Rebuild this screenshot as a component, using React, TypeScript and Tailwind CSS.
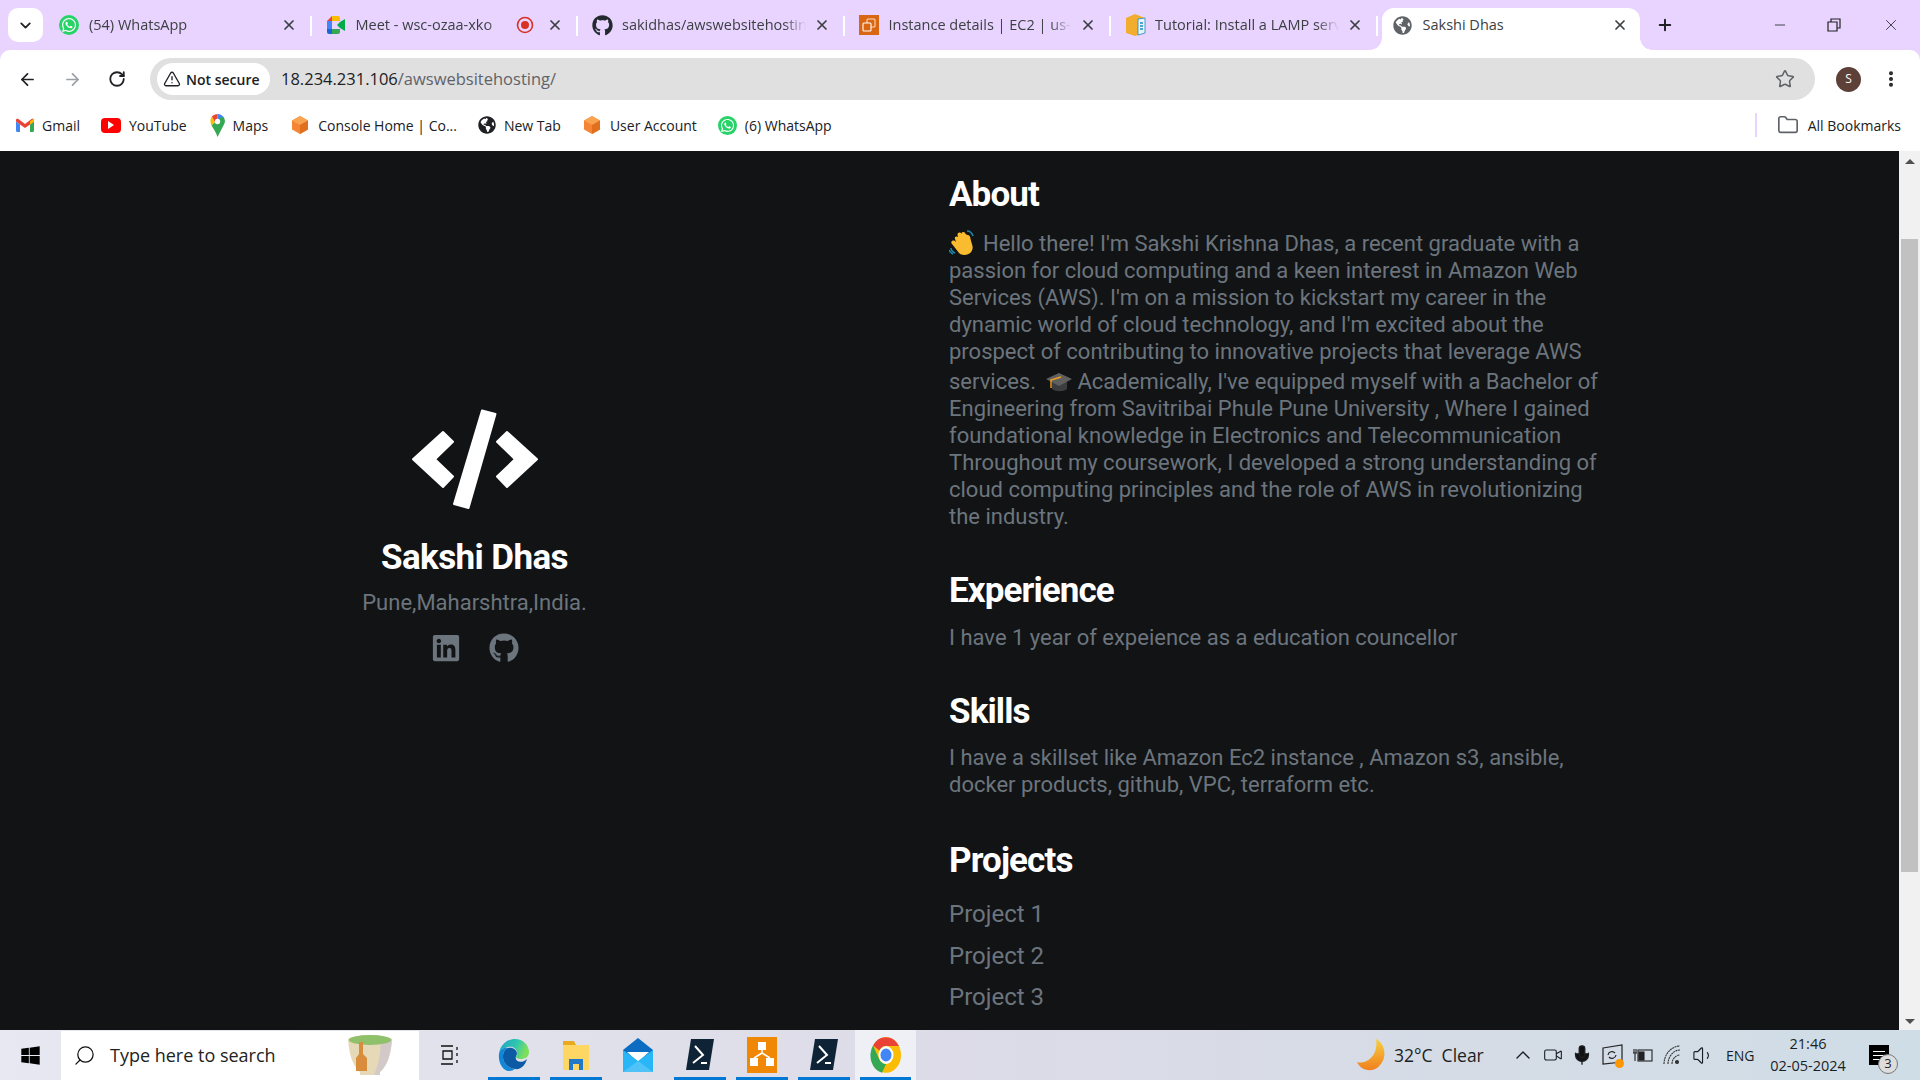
import React from "react";
import { ArrowLeft, ArrowRight, RotateCw, TriangleAlert, Star, EllipsisVertical, Folder, X, Plus, Minus, ChevronDown, ChevronUp, Search, Mic, Volume1, Video } from "lucide-react";
import { FaWhatsapp, FaGithub, FaLinkedin, FaWindows, FaGlobeAmericas } from "react-icons/fa";

const Wa = ({ s = 20 }: { s?: number }) => (
  <span className="flex shrink-0 items-center justify-center rounded-full bg-[#25d366] text-white" style={{ width: s, height: s }}>
    <FaWhatsapp size={s - 4} />
  </span>
);
const Globe = ({ c = "#202124", s = 18 }: { c?: string; s?: number }) => <FaGlobeAmericas size={s} color={c} className="shrink-0" />;
const Cube = ({ s = 20 }: { s?: number }) => (
  <svg width={s} height={s} viewBox="0 0 20 20" className="shrink-0">
    <path d="M10 1l8 4.500v9L10 19l-8-4.500v-9z" fill="#f58536" />
    <path d="M10 1l8 4.500L10 10 2 5.500z" fill="#f9a350" />
    <path d="M10 10l8-4.500v9L10 19z" fill="#e0701e" />
  </svg>
);
const MeetIcon = () => (
  <svg width="20" height="20" viewBox="0 0 20 20" className="shrink-0">
    <path d="M1 6l5-5v5z" fill="#ea4335" />
    <path d="M1 6h5v8H1z" fill="#4285f4" />
    <path d="M1 14h5v5H3a2 2 0 0 1-2-2z" fill="#1967d2" />
    <path d="M6 1h6a2 2 0 0 1 2 2v3H6z" fill="#fbbc04" />
    <path d="M6 14h8v3a2 2 0 0 1-2 2H6z" fill="#34a853" />
    <path d="M11 10l3-3v6zM14 7l5-3v12l-5-3z" fill="#00ac47" />
  </svg>
);
const Rec = () => (
  <svg width="18" height="18" viewBox="0 0 18 18" className="shrink-0">
    <circle cx="9" cy="9" r="7.500" fill="none" stroke="#d93025" strokeWidth="1.600" />
    <circle cx="9" cy="9" r="4" fill="#d93025" />
  </svg>
);
const Ec2Icon = () => (
  <svg width="20" height="20" viewBox="0 0 20 20" className="shrink-0">
    <rect width="20" height="20" fill="#d86613" />
    <rect x="8" y="4" width="8" height="8" rx="1" fill="none" stroke="#ffd9b8" strokeWidth="1.100" />
    <rect x="4" y="8" width="8" height="8" rx="1" fill="#d86613" stroke="#fff" strokeWidth="1.100" />
  </svg>
);
const BoxIcon = () => (
  <svg width="21" height="24" viewBox="0 0 21 24" className="shrink-0">
    <path d="M1 5l9-4 10 4v15l-10 3-9-3z" fill="#f2ad2e" />
    <path d="M13 6l7-1v15l-7 2z" fill="#e8f4fb" stroke="#1f8ac0" strokeWidth="0.800" />
    <path d="M15 10h3M15 13h3M15 16h3" stroke="#1f8ac0" strokeWidth="1.300" />
  </svg>
);
const Gmail = () => (
  <svg width="18" height="15" viewBox="0 0 18 14" className="shrink-0">
    <path d="M0 3v9a1.500 1.500 0 0 0 1.500 1.500H4V6z" fill="#4285f4" />
    <path d="M14 6v7.500h2.500A1.500 1.500 0 0 0 18 12V3z" fill="#34a853" />
    <path d="M4 6L0 3V1.500C0 .300 1.500-.300 2.400.500L9 5.500 15.600.500C16.500-.300 18 .300 18 1.500V3l-4 3-5 3.500z" fill="#ea4335" />
    <path d="M14 2.800L18 0v3l-4 3z" fill="#fbbc04" />
  </svg>
);
const Yt = () => (
  <span className="flex h-[15px] w-5 shrink-0 items-center justify-center rounded-[4px] bg-[#f00]">
    <span className="h-0 w-0 border-y-[4px] border-l-[6px] border-y-transparent border-l-white" />
  </span>
);
const MapsPin = () => (
  <svg width="15" height="23" viewBox="0 0 15 23" className="shrink-0">
    <path d="M7.500 0a7.500 7.500 0 0 1 6.500 3.800L10 8.500 7.500 5z" fill="#4285f4" />
    <path d="M1.800 2.600A7.500 7.500 0 0 1 7.500 0v5L5 8.500z" fill="#ea4335" />
    <path d="M.500 6A7.500 7.500 0 0 1 1.800 2.600L5 8.500 1.500 11.500C.800 10 .300 8 .500 6z" fill="#fbbc04" />
    <path d="M1.500 11.500L11 3 14 3.800c1.500 2.500 1 5.200-.300 7.200L7.500 23C6 18 3.500 15 1.500 11.500z" fill="#34a853" />
    <circle cx="7.500" cy="7.500" r="2.700" fill="#fff" />
  </svg>
);

const TABS: { i: React.ReactNode; t: string; rec?: boolean }[] = [
  { i: <Wa />, t: "(54) WhatsApp" },
  { i: <MeetIcon />, t: "Meet - wsc-ozaa-xko", rec: true },
  { i: <FaGithub size={21} color="#24292f" className="shrink-0" />, t: "sakidhas/awswebsitehosting" },
  { i: <Ec2Icon />, t: "Instance details | EC2 | us-east-1" },
  { i: <BoxIcon />, t: "Tutorial: Install a LAMP server on" },
];

function Tab({ i, t, rec }: { i: React.ReactNode; t: string; rec?: boolean }) {
  return (
    <div className="relative flex h-[50px] w-[266.500px] shrink-0 items-center pl-[14px] pr-[15px]">
      <span className="flex w-[20px] justify-center">{i}</span>
      <span className="ml-[10px] mr-[8px] min-w-0 flex-1 overflow-hidden whitespace-nowrap text-[14.500px] text-[#3c4043] [mask-image:linear-gradient(to_left,transparent_0,black_22px)]">
        {t}
      </span>
      {rec && <span className="mr-[13px]"><Rec /></span>}
      <X size={16} strokeWidth={2.600} className="shrink-0 text-[#3c4043]" />
      <span className="absolute right-0 top-[16px] h-[20px] w-[2px] bg-white" />
    </div>
  );
}

function TabBar() {
  return (
    <div className="flex h-[50px] shrink-0 items-end bg-[#e8d4fe]">
      <div className="ml-[8px] mr-[2px] flex h-[34px] w-[35px] shrink-0 items-center justify-center self-center rounded-[10px] bg-white">
        <ChevronDown size={17} strokeWidth={2.600} color="#202124" />
      </div>
      <div className="flex">
        {TABS.map((x) => <Tab key={x.t} i={x.i} t={x.t} rec={x.rec} />)}
      </div>
      <div className="relative ml-[4px] flex h-[42px] w-[258px] shrink-0 items-center rounded-t-[12px] bg-white pb-[8px] pl-[11px] pr-[12px]">
        <span className="absolute bottom-0 left-[-12px] h-[12px] w-[12px] bg-[radial-gradient(circle_at_0_0,#e8d4fe_11.500px,#ffffff_12px)]" />
        <span className="absolute bottom-0 right-[-12px] h-[12px] w-[12px] bg-[radial-gradient(circle_at_100%_0,#e8d4fe_11.500px,#ffffff_12px)]" />
        <Globe c="#5f6368" s={19} />
        <span className="ml-[11px] flex-1 text-[14.500px] text-[#3c4043]">Sakshi Dhas</span>
        <X size={16} strokeWidth={2.600} className="text-[#3c4043]" />
      </div>
      <div className="ml-[16px] flex h-[50px] items-center">
        <Plus size={18} strokeWidth={2.600} className="text-[#202124]" />
      </div>
      <div className="ml-auto flex h-[50px] items-center pr-[20px]">
        <Minus size={16} strokeWidth={1.200} className="mr-[39px] text-[#202124]" />
        <svg width="14" height="14" viewBox="0 0 14 14" className="mr-[41px]">
          <path d="M1 4h9v9H1zM4 4V1h9v9h-3" fill="none" stroke="#202124" strokeWidth="1.200" />
        </svg>
        <X size={18} strokeWidth={1.100} className="text-[#202124]" />
      </div>
    </div>
  );
}

function Toolbar() {
  return (
    <div className="flex h-[50px] shrink-0 items-center rounded-tl-[10px] rounded-tr-[10px] bg-white pl-[18px] pt-[8px]">
      <ArrowLeft size={19} strokeWidth={2.200} className="text-[#202124]" />
      <ArrowRight size={19} strokeWidth={2.200} className="ml-[26px] text-[#9aa0a6]" />
      <RotateCw size={18} strokeWidth={2.400} className="ml-[26px] text-[#202124]" />
      <div className="ml-[24px] flex h-[42px] w-[1665px] items-center rounded-full bg-[#e0e0e0] pl-[7px] pr-[20px]">
        <div className="flex h-[32px] w-[113px] items-center rounded-full bg-white pl-[6px]">
          <TriangleAlert size={18} strokeWidth={1.800} className="text-[#202124]" />
          <span className="ml-[5px] text-[14px] font-semibold text-[#202124]">Not secure</span>
        </div>
        <span className="ml-[11px] text-[16.500px] text-[#202124]">
          18.234.231.106<span className="text-[#5f6368]">/awswebsitehosting/</span>
        </span>
        <Star size={20} strokeWidth={1.800} className="ml-auto text-[#5f6368]" />
      </div>
      <div className="ml-[21px] flex h-[25px] w-[25px] items-center justify-center rounded-full bg-[#5d4037] text-[12px] text-white">S</div>
      <EllipsisVertical size={20} strokeWidth={2.800} className="ml-[20px] text-[#202124]" />
    </div>
  );
}

function Bm({ i, t, ml }: { i: React.ReactNode; t: string; ml: string }) {
  return (
    <div className={`flex items-center gap-[8px] text-[14px] text-[#202124] ${ml}`}>
      {i}
      <span>{t}</span>
    </div>
  );
}

function Bookmarks() {
  return (
    <div className="flex h-[51px] shrink-0 items-center bg-white pb-[1px] pl-[16px] pr-[19px]">
      <Bm i={<Gmail />} t="Gmail" ml="" />
      <Bm i={<Yt />} t="YouTube" ml="ml-[21px]" />
      <Bm i={<MapsPin />} t="Maps" ml="ml-[23px]" />
      <Bm i={<Cube />} t="Console Home | Co..." ml="ml-[22px]" />
      <Bm i={<Globe s={18} />} t="New Tab" ml="ml-[21px]" />
      <Bm i={<Cube />} t="User Account" ml="ml-[21px]" />
      <Bm i={<Wa s={19} />} t="(6) WhatsApp" ml="ml-[21px]" />
      <span className="ml-auto h-[24px] w-[2px] bg-[#e8d4fe]" />
      <Folder size={22} strokeWidth={1.800} className="ml-[20px] text-[#5f6368]" />
      <span className="ml-[9px] text-[14px] text-[#202124]">All Bookmarks</span>
    </div>
  );
}

const Wave = () => (
  <svg width="26" height="26" viewBox="0 0 26 26" className="mr-[8px] inline-block align-[-5px]">
    <path d="M3 11c2-1 3 0 4 1L6 9c-1-3 2-3 3-2L8.500 5c0-3 3-3 4-1l0-1c1-2 4-1 4 1l2 1c2 0 3 2 3 4l2 7c1 5-3 9-8 9-3 0-5-1-7-4L3 14c-1-1-1-2 0-3z" fill="#f9bb2f" />
    <path d="M2 18c0 2 2 4 4 5M0 20c1 2 2 3 4 4M18 1c3 0 5 2 6 5" fill="none" stroke="#1d8aa8" strokeWidth="1.500" />
  </svg>
);
const Cap = () => (
  <svg width="28" height="30" viewBox="0 -4 28 30" className="mx-[4px] inline-block align-[-6px]">
    <path d="M7 13v7c4 3 11 3 15 0v-7z" fill="#3d3d3d" />
    <path d="M14 4L27 10 14 17 1 10z" fill="#5f5f5f" />
    <path d="M16 8L6 11v8" fill="none" stroke="#f0a020" strokeWidth="1.400" />
  </svg>
);

const H = ({ children, cls }: { children: React.ReactNode; cls: string }) => (
  <h2 className={`text-[35px] font-bold leading-[41px] tracking-[-0.9px] text-white ${cls}`}>{children}</h2>
);

function Page() {
  return (
    <div className="flex min-h-0 flex-1 overflow-hidden bg-[#121315] font-['Roboto',sans-serif]">
      <div className="flex min-w-0 flex-1">
        <div className="flex w-[949px] shrink-0 flex-col items-center pt-[258px]">
          <svg width="126" height="102" viewBox="0 0 126 102" fill="#fff" stroke="#fff" strokeWidth="2" strokeLinejoin="round">
            <path d="M1 50.300L31 23l10 9.700L23 50.300 41 67.500 31 78z" />
            <path d="M125 50.300L95 23l-10 9.700L103 50.300 85 67.500 95 78z" />
            <path d="M70 1.500L83.500 5 56.500 99 42 95z" />
          </svg>
          <div className="mt-[26px] text-[35px] font-bold leading-[41px] tracking-[-0.6px] text-white">Sakshi Dhas</div>
          <div className="mt-[11px] text-[22px] leading-[27px] text-[#6c757d]">Pune,Maharshtra,India.</div>
          <div className="mt-[17px] flex items-center gap-[28px] text-[#6c757d]">
            <FaLinkedin size={30} />
            <FaGithub size={30} />
          </div>
        </div>
        <div className="w-[656px] shrink-0 pt-[23px] text-[22px] leading-[27px] text-[#6c757d]">
          <H cls="">About</H>
          <p className="mt-[15px]">
            <Wave />Hello there! I'm Sakshi Krishna Dhas, a recent graduate with a passion for cloud computing and a keen interest in Amazon Web Services (AWS). I'm on a mission to kickstart my career in the dynamic world of cloud technology, and I'm excited about the prospect of contributing to innovative projects that leverage AWS services. <Cap />Academically, I've equipped myself with a Bachelor of Engineering from Savitribai Phule Pune University , Where I gained foundational knowledge in Electronics and Telecommunication Throughout my coursework, I developed a strong understanding of cloud computing principles and the role of AWS in revolutionizing the industry.
          </p>
          <H cls="mt-[40px]">Experience</H>
          <p className="mt-[13px]">I have 1 year of expeience as a education councellor</p>
          <H cls="mt-[40px]">Skills</H>
          <p className="mt-[12px]">I have a skillset like Amazon Ec2 instance , Amazon s3, ansible, docker products, github, VPC, terraform etc.</p>
          <H cls="mt-[42px]">Projects</H>
          <div className="mt-[20px] flex flex-col gap-[14.500px] text-[24px] leading-[27px]">
            <span>Project 1</span>
            <span>Project 2</span>
            <span>Project 3</span>
          </div>
        </div>
      </div>
      <div className="flex w-[21px] shrink-0 flex-col items-center bg-[#f1f1f1]">
        <span className="mt-[8px] h-0 w-0 border-x-[5px] border-b-[5px] border-x-transparent border-b-[#505050]" />
        <div className="mt-[75px] h-[633px] w-[17px] bg-[#c1c1c1]" />
        <span className="mb-[6px] mt-auto h-0 w-0 border-x-[5px] border-t-[5px] border-x-transparent border-t-[#505050]" />
      </div>
    </div>
  );
}

const Pwsh = () => (
  <svg width="28" height="40" viewBox="0 0 28 40">
    <path d="M5 4h23l-5 31H0z" fill="#0f2336" />
    <path d="M9 11l8 9-10 8M15 28h6" fill="none" stroke="#fff" strokeWidth="2" />
  </svg>
);
const Edge = () => (
  <svg width="32" height="32" viewBox="0 0 32 32">
    <defs>
      <linearGradient id="edg" x1="0" y1="0" x2="1" y2="0.300"><stop offset="0" stopColor="#1fa0c8" /><stop offset="0.600" stopColor="#2fc6b0" /><stop offset="1" stopColor="#7ee05a" /></linearGradient>
    </defs>
    <path d="M1 15C2 6 9 0 17 0c8 0 14 6 14 13 0 5-4 7-8 7s-5-1-5-3c0-1 1-2 1-3 0-4-4-7-9-6-5 1-8 4-9 7z" fill="url(#edg)" />
    <path d="M1 15c1-4 5-7 9-6-4 2-5 5-5 9 0 6 5 11 12 12-2 1-3 2-6 2C5 32 0 24 1 15z" fill="#0f86d6" />
    <path d="M10 9c5-1 9 2 9 6 0 0-1 1-1 2-2 6 6 8 11 3-2 7-7 11-12 10-7-1-12-6-12-12 0-4 1-7 5-9z" fill="#0c59a4" />
  </svg>
);
const Files = () => (
  <svg width="28" height="32" viewBox="0 0 28 32">
    <path d="M1 2h11l2 4H1z" fill="#e9a91f" />
    <rect x="1" y="6" width="26" height="25" fill="#fdd663" />
    <path d="M7 31V20h14v11h-4v-6h-6v6z" fill="#1f78c8" />
  </svg>
);
const Mail = () => (
  <svg width="30" height="34" viewBox="0 0 30 34">
    <path d="M0 12L15 0l15 12v22H0z" fill="#0b6cc1" />
    <path d="M4 14h22L15 24z" fill="#fff" />
    <path d="M0 12l15 11 15-11v22H0z" fill="#29b6f6" />
    <path d="M0 34l15-11 15 11z" fill="#4fc3f7" />
  </svg>
);
const Arch = () => (
  <svg width="30" height="36" viewBox="0 0 30 36">
    <rect width="30" height="36" fill="#f08705" />
    <rect x="11" y="5" width="8" height="8" fill="#fff" />
    <rect x="3" y="21" width="8" height="8" fill="#fff" />
    <rect x="19" y="21" width="8" height="8" fill="#fff" />
    <path d="M15 13v4M7 21l8-5 8 5" fill="none" stroke="#fff" strokeWidth="1.500" />
  </svg>
);
const Chrome = () => (
  <svg width="32" height="38" viewBox="0 0 32 32" preserveAspectRatio="none">
    <circle cx="16" cy="16" r="15" fill="#fbbc04" />
    <path d="M16 1a15 15 0 0 1 13 7.500H16a7.500 7.500 0 0 0-6.500 3.800L3 8A15 15 0 0 1 16 1z" fill="#ea4335" />
    <path d="M3 8l6.500 12A7.500 7.500 0 0 0 16 23.500L12 31A15 15 0 0 1 3 8z" fill="#34a853" />
    <circle cx="16" cy="16" r="7.500" fill="#fff" />
    <circle cx="16" cy="16" r="5.500" fill="#4285f4" />
  </svg>
);
const Cup = () => (
  <svg width="48" height="44" viewBox="0 0 48 44">
    <path d="M2 6c6-5 38-5 44 0-1 14-4 26-12 33v3H14v-3C6 32 3 20 2 6z" fill="#e6d9b8" />
    <path d="M34 6c2 14-2 26-6 36h6v-3c8-7 11-19 12-33z" fill="#d3c9c9" />
    <ellipse cx="24" cy="7" rx="21" ry="5" fill="#8fc06a" />
    <path d="M13 9v12l-3 4v13h11V25l-4-4V9z" fill="#d98d3c" />
  </svg>
);

function TI({ children, u, active, w = 62 }: { children: React.ReactNode; u?: boolean; active?: boolean; w?: number }) {
  return (
    <div className={`relative flex h-[50px] shrink-0 items-center justify-center ${active ? "bg-[#eff0f5]" : ""}`} style={{ width: w }}>
      {children}
      {u && <span className="absolute bottom-0 left-[5px] right-[5px] h-[3px] bg-[#0078d4]" />}
    </div>
  );
}

function Taskbar() {
  return (
    <div className="flex h-[50px] shrink-0 items-center bg-gradient-to-r from-[#e7e8f1] via-[#dcdbe7] to-[#cfdde6] font-['Open_Sans',sans-serif] text-[#1b1f23]">
      <div className="flex w-[61px] shrink-0 justify-center"><FaWindows size={21} color="#000" /></div>
      <div className="flex h-[49px] w-[358px] shrink-0 items-center bg-white pl-[12px] pr-[25px]">
        <Search size={23} strokeWidth={1.300} className="-scale-x-100 text-[#111]" />
        <span className="ml-[14px] flex-1 text-[18px] text-[#222]">Type here to search</span>
        <Cup />
      </div>
      <div className="ml-[1px] mr-[3px] flex w-[60px] shrink-0 justify-center">
        <svg width="20" height="20" viewBox="0 0 20 20" fill="none" stroke="#111" strokeWidth="1.300">
          <path d="M1 1h12M1 19h12M3 6h9v8H3zM17 2v3M17 8v3M17 15v3" />
        </svg>
      </div>
      <TI u><Edge /></TI>
      <TI u><Files /></TI>
      <TI><Mail /></TI>
      <TI u><Pwsh /></TI>
      <TI u><Arch /></TI>
      <TI u><Pwsh /></TI>
      <TI u active w={61}><Chrome /></TI>
      <div className="ml-auto flex h-full items-center">
        <svg width="30" height="34" viewBox="0 0 30 34" className="mr-[8px]">
          <defs><linearGradient id="moon" x1="0" y1="0" x2="0" y2="1"><stop offset="0" stopColor="#f6cf3f" /><stop offset="1" stopColor="#f0801e" /></linearGradient></defs>
          <path d="M20 1c10 5 12 21 1 29-8 5-17 1-20-6 9 3 22-6 19-23z" fill="url(#moon)" />
        </svg>
        <span className="w-[105px] whitespace-nowrap text-[17.500px]">32°C&nbsp;&nbsp;Clear</span>
        <div className="ml-[9px] flex w-[30px] justify-center"><ChevronUp size={24} strokeWidth={1.400} /></div>
        <div className="flex w-[30px] justify-center"><Video size={20} strokeWidth={1.300} /></div>
        <div className="flex w-[28px] justify-center">
          <Mic size={22} strokeWidth={1.500} fill="#111" />
        </div>
        <div className="relative flex w-[32px] justify-center">
          <svg width="21" height="22" viewBox="0 0 21 22" fill="none" stroke="#222" strokeWidth="1.200">
            <path d="M1 4l19-3v17L1 20z" />
            <path d="M6 11a4 4 0 0 1 7-2M14 11a4 4 0 0 1-7 2" />
          </svg>
          <span className="absolute bottom-[-2px] right-[4px] h-[9px] w-[9px] rounded-full bg-[#ff9800]" />
        </div>
        <div className="flex w-[30px] justify-center">
          <svg width="20" height="14" viewBox="0 0 20 14" fill="none" stroke="#222" strokeWidth="1.100">
            <rect x="5" y="2" width="14" height="11" />
            <rect x="6" y="4" width="5" height="8" fill="#222" />
            <path d="M1 1v4M3 1v4M0 5h4M2 5v8" />
          </svg>
        </div>
        <div className="flex w-[30px] justify-center">
          <svg width="20" height="20" viewBox="0 0 20 20" fill="none" stroke="#333" strokeWidth="1.100">
            <path d="M1 19C1 9 9 1 17 1M5 19C5 11 11 5 17 5M9 19c0-5 4-9 8-9" strokeDasharray="2 .6" />
            <circle cx="14" cy="17" r="1.500" fill="#333" />
          </svg>
        </div>
        <div className="flex w-[30px] justify-center"><Volume1 size={23} strokeWidth={1.200} /></div>
        <span className="ml-[8px] w-[34px] text-[14px]">ENG</span>
        <div className="ml-[10px] flex w-[76px] flex-col items-center text-[14.500px] leading-[22px]">
          <span>21:46</span>
          <span className="whitespace-nowrap">02-05-2024</span>
        </div>
        <div className="relative ml-[23px] mr-[31px] flex h-[20px] w-[20px] flex-col justify-center gap-[3px] bg-black px-[4px]">
          <span className="h-px bg-white" /><span className="h-px bg-white" /><span className="h-px bg-white" />
          <span className="absolute left-[9px] top-[9px] flex h-[20px] w-[20px] items-center justify-center rounded-full border border-[#777] bg-[#ddd] text-[13px] text-[#222]">3</span>
        </div>
      </div>
    </div>
  );
}

export default function App() {
  return (
    <div className="flex h-screen w-screen flex-col overflow-hidden bg-[#e8d4fe] font-['Open_Sans',sans-serif]">
      <TabBar />
      <Toolbar />
      <Bookmarks />
      <Page />
      <Taskbar />
    </div>
  );
}
